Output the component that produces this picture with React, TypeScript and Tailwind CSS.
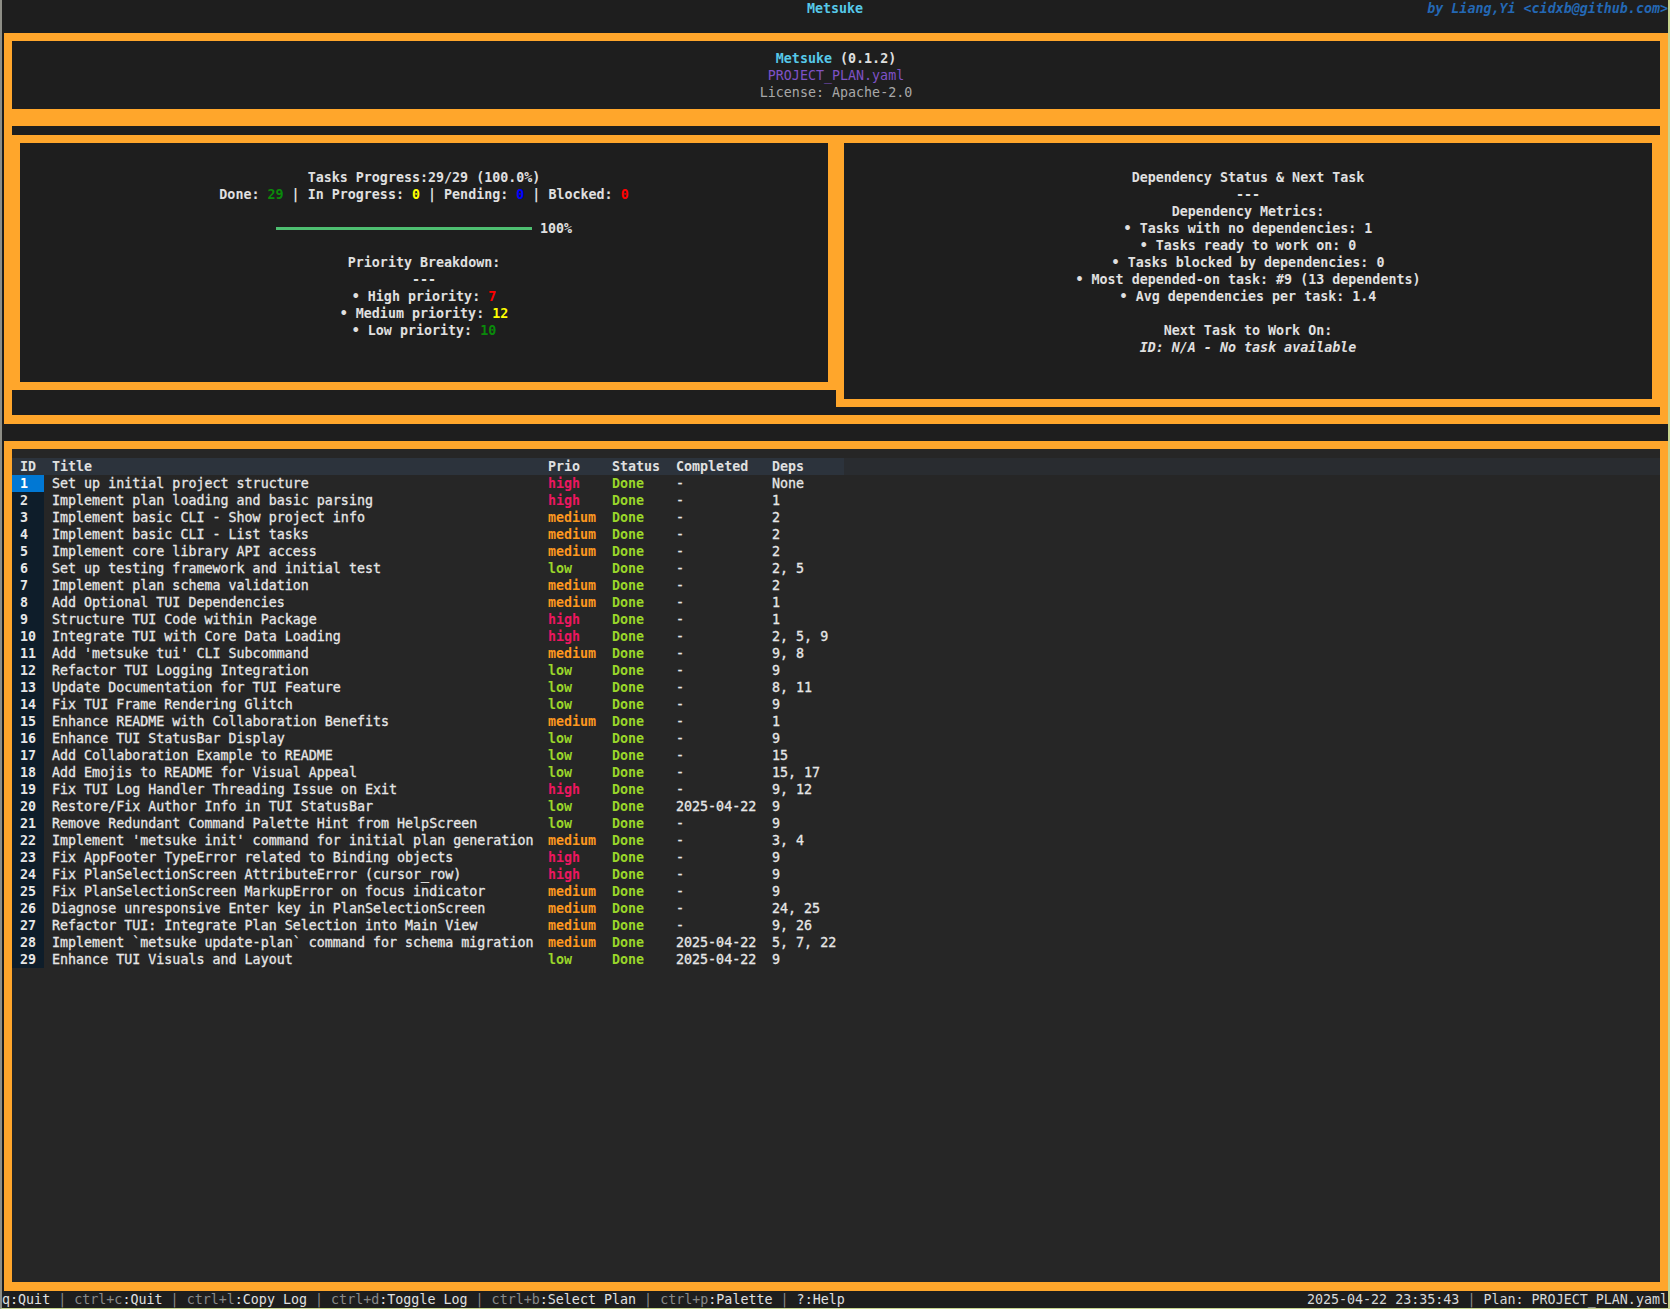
import React from 'react';

type Prio = 'high' | 'medium' | 'low';

interface Task {
  id: number;
  title: string;
  prio: Prio;
  completed: string;
  deps: string;
}

const tasks: Task[] = [
  { id: 1, title: 'Set up initial project structure', prio: 'high', completed: '-', deps: 'None' },
  { id: 2, title: 'Implement plan loading and basic parsing', prio: 'high', completed: '-', deps: '1' },
  { id: 3, title: 'Implement basic CLI - Show project info', prio: 'medium', completed: '-', deps: '2' },
  { id: 4, title: 'Implement basic CLI - List tasks', prio: 'medium', completed: '-', deps: '2' },
  { id: 5, title: 'Implement core library API access', prio: 'medium', completed: '-', deps: '2' },
  { id: 6, title: 'Set up testing framework and initial test', prio: 'low', completed: '-', deps: '2, 5' },
  { id: 7, title: 'Implement plan schema validation', prio: 'medium', completed: '-', deps: '2' },
  { id: 8, title: 'Add Optional TUI Dependencies', prio: 'medium', completed: '-', deps: '1' },
  { id: 9, title: 'Structure TUI Code within Package', prio: 'high', completed: '-', deps: '1' },
  { id: 10, title: 'Integrate TUI with Core Data Loading', prio: 'high', completed: '-', deps: '2, 5, 9' },
  { id: 11, title: "Add 'metsuke tui' CLI Subcommand", prio: 'medium', completed: '-', deps: '9, 8' },
  { id: 12, title: 'Refactor TUI Logging Integration', prio: 'low', completed: '-', deps: '9' },
  { id: 13, title: 'Update Documentation for TUI Feature', prio: 'low', completed: '-', deps: '8, 11' },
  { id: 14, title: 'Fix TUI Frame Rendering Glitch', prio: 'low', completed: '-', deps: '9' },
  { id: 15, title: 'Enhance README with Collaboration Benefits', prio: 'medium', completed: '-', deps: '1' },
  { id: 16, title: 'Enhance TUI StatusBar Display', prio: 'low', completed: '-', deps: '9' },
  { id: 17, title: 'Add Collaboration Example to README', prio: 'low', completed: '-', deps: '15' },
  { id: 18, title: 'Add Emojis to README for Visual Appeal', prio: 'low', completed: '-', deps: '15, 17' },
  { id: 19, title: 'Fix TUI Log Handler Threading Issue on Exit', prio: 'high', completed: '-', deps: '9, 12' },
  { id: 20, title: 'Restore/Fix Author Info in TUI StatusBar', prio: 'low', completed: '2025-04-22', deps: '9' },
  { id: 21, title: 'Remove Redundant Command Palette Hint from HelpScreen', prio: 'low', completed: '-', deps: '9' },
  { id: 22, title: "Implement 'metsuke init' command for initial plan generation", prio: 'medium', completed: '-', deps: '3, 4' },
  { id: 23, title: 'Fix AppFooter TypeError related to Binding objects', prio: 'high', completed: '-', deps: '9' },
  { id: 24, title: 'Fix PlanSelectionScreen AttributeError (cursor_row)', prio: 'high', completed: '-', deps: '9' },
  { id: 25, title: 'Fix PlanSelectionScreen MarkupError on focus indicator', prio: 'medium', completed: '-', deps: '9' },
  { id: 26, title: 'Diagnose unresponsive Enter key in PlanSelectionScreen', prio: 'medium', completed: '-', deps: '24, 25' },
  { id: 27, title: 'Refactor TUI: Integrate Plan Selection into Main View', prio: 'medium', completed: '-', deps: '9, 26' },
  { id: 28, title: 'Implement `metsuke update-plan` command for schema migration', prio: 'medium', completed: '2025-04-22', deps: '5, 7, 22' },
  { id: 29, title: 'Enhance TUI Visuals and Layout', prio: 'low', completed: '2025-04-22', deps: '9' },
];

const prioColor: Record<Prio, string> = {
  high: 'text-[#ee1660]',
  medium: 'text-[#fd971f]',
  low: 'text-[#9ad62a]',
};

const footerKeys = [
  { key: 'q', label: 'Quit', bright: true },
  { key: 'ctrl+c', label: 'Quit' },
  { key: 'ctrl+l', label: 'Copy Log' },
  { key: 'ctrl+d', label: 'Toggle Log' },
  { key: 'ctrl+b', label: 'Select Plan' },
  { key: 'ctrl+p', label: 'Palette' },
  { key: '?', label: 'Help', bright: true },
];

function Line({ children, className = '' }: { children?: React.ReactNode; className?: string }) {
  return <div className={`h-[17px] whitespace-pre text-center ${className}`}>{children}</div>;
}

function ProgressPanel() {
  return (
    <div className="w-[824px] h-[255px] border-8 border-[#ffa62b] bg-[#1e1e1e] pt-[26px] font-bold text-[#e0e0e0]">
      <Line>Tasks Progress:29/29 (100.0%)</Line>
      <Line>
        Done: <span className="text-[#0a8a0a]">29</span> | In Progress: <span className="text-[#ffff00]">0</span> | Pending:{' '}
        <span className="text-[#0000ff]">0</span> | Blocked: <span className="text-[#ff0000]">0</span>
      </Line>
      <Line />
      <div className="h-[17px] flex items-center justify-center">
        <div className="w-[256px] h-[3px] bg-[#4ebf71]" />
        <span className="ml-[8px]">100%</span>
      </div>
      <Line />
      <Line>Priority Breakdown:</Line>
      <Line>---</Line>
      <Line>
        • High priority: <span className="text-[#ff0000]">7</span>
      </Line>
      <Line>
        • Medium priority: <span className="text-[#ffff00]">12</span>
      </Line>
      <Line>
        • Low priority: <span className="text-[#0a8a0a]">10</span>
      </Line>
    </div>
  );
}

function DependencyPanel() {
  return (
    <div className="w-[824px] h-[272px] border-8 border-[#ffa62b] bg-[#1e1e1e] pt-[26px] font-bold text-[#e0e0e0]">
      <Line>Dependency Status &amp; Next Task</Line>
      <Line>---</Line>
      <Line>Dependency Metrics:</Line>
      <Line>• Tasks with no dependencies: 1</Line>
      <Line>• Tasks ready to work on: 0</Line>
      <Line>• Tasks blocked by dependencies: 0</Line>
      <Line>• Most depended-on task: #9 (13 dependents)</Line>
      <Line>• Avg dependencies per task: 1.4</Line>
      <Line />
      <Line>Next Task to Work On:</Line>
      <Line className="italic">ID: N/A - No task available</Line>
    </div>
  );
}

function TaskTable() {
  // plain cells get a hair of stroke so they read like the terminal's heavier rendering
  const plain = 'pl-[8px] [-webkit-text-stroke:0.3px_#e6e6e6]';
  return (
    <div className="pt-[9px]">
      <div className="flex h-[17px] font-bold text-[#e0e0e0]">
        <div className="w-[32px] pl-[8px] bg-[#2c333c]">ID</div>
        <div className="w-[496px] pl-[8px] bg-[#2c333c]">Title</div>
        <div className="w-[64px] pl-[8px] bg-[#2c333c]">Prio</div>
        <div className="w-[64px] pl-[8px] bg-[#2c333c]">Status</div>
        <div className="w-[96px] pl-[8px] bg-[#2c333c]">Completed</div>
        <div className="w-[80px] pl-[8px] bg-[#2c333c]">Deps</div>
        <div className="flex-1 bg-[#292c30]" />
      </div>
      {tasks.map(t => (
        <div key={t.id} className="flex h-[17px] text-[#e6e6e6] whitespace-pre">
          <div
            className={`w-[32px] pl-[8px] font-bold ${t.id === 1 ? 'bg-[#0178d4] text-white' : 'bg-[#0e1d2a]'}`}
          >
            {t.id}
          </div>
          <div className={`w-[496px] ${plain}`}>{t.title}</div>
          <div className={`w-[64px] pl-[8px] font-bold ${prioColor[t.prio]}`}>{t.prio}</div>
          <div className="w-[64px] pl-[8px] font-bold text-[#9ad62a]">Done</div>
          <div className={`w-[96px] ${plain}`}>{t.completed}</div>
          <div className={`w-[80px] ${plain}`}>{t.deps}</div>
        </div>
      ))}
    </div>
  );
}

export default function App() {
  return (
    <div className="w-[1670px] h-[1309px] flex flex-col overflow-hidden bg-[#1e1e1e] border-l-2 border-r-2 border-b border-l-[#8e8e86] border-r-[#c6d48e] border-b-[#c6d48e] font-['DejaVu_Sans_Mono',monospace] text-[13.33px] leading-[17px] text-[#e0e0e0]">
      {/* title bar */}
      <div className="grid grid-cols-[1fr_auto_1fr] h-[17px] shrink-0">
        <div />
        <div className="font-bold text-[#56c8e8]">Metsuke</div>
        <div className="flex justify-end whitespace-pre font-bold italic text-[#2468b4]">
          by Liang,Yi &lt;cidxb@github.com&gt;
        </div>
      </div>

      {/* project header */}
      <div className="mt-[16px] ml-[2px] h-[84px] shrink-0 border-8 border-[#ffa62b] bg-[#1e1e1e] pt-[9px]">
        <Line className="font-bold">
          <span className="text-[#56c8e8]">Metsuke</span> (0.1.2)
        </Line>
        <Line className="text-[#7e52c6]">PROJECT_PLAN.yaml</Line>
        <Line className="text-[#a8a8a8]">License: Apache-2.0</Line>
      </div>

      {/* stats */}
      <div className="ml-[2px] h-[307px] shrink-0 border-x-8 border-t-[9px] border-b-[9px] border-[#ffa62b] bg-[#1e1e1e] pt-[9px]">
        <div className="flex items-start">
          <ProgressPanel />
          <DependencyPanel />
        </div>
      </div>

      {/* tasks */}
      <div className="mt-[17px] ml-[2px] flex-1 min-h-0 border-x-8 border-t-8 border-b-[9px] border-[#ffa62b] bg-[#262626]">
        <TaskTable />
      </div>

      {/* footer */}
      <div className="h-[17px] shrink-0 flex justify-between whitespace-pre bg-[#1e1e1e]">
        <div>
          {footerKeys.map((k, i) => (
            <span key={k.key}>
              {i > 0 && <span className="text-[#8a8a8a]"> | </span>}
              <span className={k.bright ? 'text-[#e0e0e0]' : 'text-[#8a8a8a]'}>{k.key}</span>
              <span className="text-[#e0e0e0]">:{k.label}</span>
            </span>
          ))}
        </div>
        <div className="text-[#d8d8d8]">
          2025-04-22 23:35:43 <span className="text-[#8a8a8a]">|</span> Plan: PROJECT_PLAN.yaml
        </div>
      </div>
    </div>
  );
}
